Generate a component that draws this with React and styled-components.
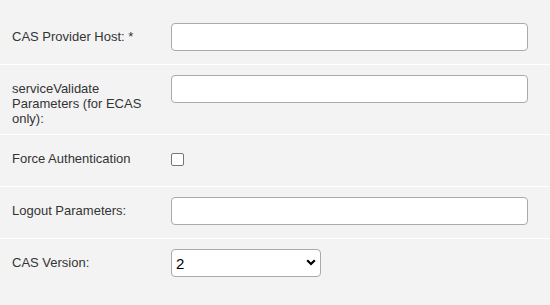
import styled, { createGlobalStyle } from "styled-components";

const GlobalStyle = createGlobalStyle`
  html, body {
    margin: 0;
    padding: 0;
    background: #f3f3f3;
  }
  body {
    font-family: "Liberation Sans", Arial, sans-serif;
    font-size: 13px;
    color: #333;
  }
`;

const Form = styled.form`
  padding-top: 13px;
  width: 550px;
`;

const Row = styled.div`
  display: grid;
  grid-template-columns: 171px 1fr;
  border-bottom: 1px solid #fff;
  &:last-child {
    border-bottom: none;
  }
`;

const Label = styled.label`
  padding: 16px 16px 8px 12px;
  line-height: 15px;
`;

const Field = styled.div`
  padding: 10px 22px 13px 0;
  display: flex;
  align-items: ${(p) => (p.$top ? "flex-start" : "center")};
  min-height: 28px;
`;

const TextInput = styled.input`
  box-sizing: border-box;
  width: 100%;
  height: 28px;
  margin: 0;
  padding: 0 6px;
  border: 1px solid #aaa;
  border-radius: 4px;
  background: #fff;
  font: inherit;
  outline: none;
`;

const Check = styled.input`
  appearance: none;
  margin: 0;
  width: 13px;
  height: 13px;
  border: 1px solid #767676;
  border-radius: 2px;
  background: #fff;
`;

const SelectWrap = styled.div`
  position: relative;
  width: 150px;
`;

const Select = styled.select`
  appearance: none;
  box-sizing: border-box;
  width: 150px;
  height: 28px;
  margin: 0;
  padding: 0 4px;
  border: 1px solid #aaa;
  border-radius: 4px;
  background: #fff;
  color: #000;
  font-family: "Liberation Sans", Arial, sans-serif;
  font-size: 15px;
  outline: none;
`;

const Arrow = styled.svg`
  position: absolute;
  right: 5px;
  top: 10px;
  pointer-events: none;
`;

const App = () => {
  return (
    <>
      <GlobalStyle />
      <Form onSubmit={(e) => e.preventDefault()}>
        <Row>
          <Label>CAS Provider Host: *</Label>
          <Field>
            <TextInput type="text" />
          </Field>
        </Row>
        <Row>
          <Label>serviceValidate Parameters (for ECAS only):</Label>
          <Field $top>
            <TextInput type="text" />
          </Field>
        </Row>
        <Row>
          <Label>Force Authentication</Label>
          <Field>
            <Check type="checkbox" />
          </Field>
        </Row>
        <Row>
          <Label>Logout Parameters:</Label>
          <Field>
            <TextInput type="text" />
          </Field>
        </Row>
        <Row>
          <Label>CAS Version:</Label>
          <Field>
            <SelectWrap>
              <Select defaultValue="2">
                <option value="1">1</option>
                <option value="2">2</option>
                <option value="3">3</option>
              </Select>
              <Arrow width="10" height="7" viewBox="0 0 10 7">
                <path d="M1.2 1.2 L5 5 L8.8 1.2" fill="none" stroke="#000" strokeWidth="2.2" />
              </Arrow>
            </SelectWrap>
          </Field>
        </Row>
      </Form>
    </>
  );
};

export default App;
